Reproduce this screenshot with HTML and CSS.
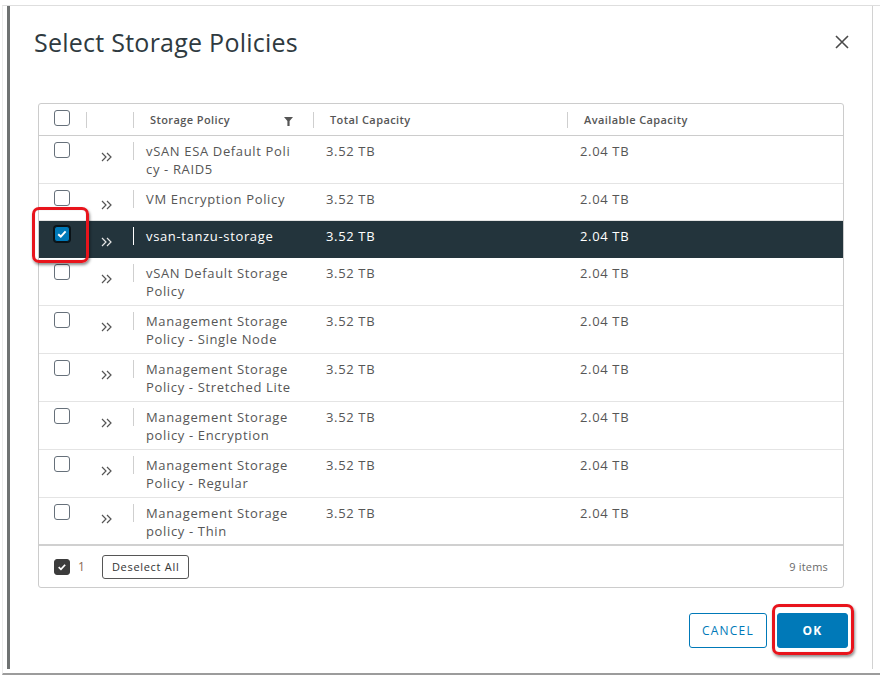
FILE: index.html
```html
<!DOCTYPE html>
<html>
<head>
<meta charset="utf-8">
<link rel="stylesheet" href="styles.css">
</head>
<body>
<div class="screen">
  <div class="dialog">
    <div class="dlg-head">
      <h1 class="title">Select Storage Policies</h1>
      <button class="close" aria-label="Close">
        <svg width="14" height="14" viewBox="0 0 14 14"><path d="M1 1 L13 13 M13 1 L1 13" stroke="#4a4a4a" stroke-width="1.6" fill="none"/></svg>
      </button>
    </div>

    <div class="grid">
      <div class="row head">
        <div class="cell c-check"><span class="cb"></span></div>
        <div class="cell c-exp"><span class="vsep"></span></div>
        <div class="cell c-name"><span class="vsep"></span><span class="htext">Storage Policy</span>
          <svg class="filter" width="9" height="9" viewBox="0 0 9 9"><path d="M0 0 H9 L5.6 4 V9 H3.4 V4 Z" fill="#555"/></svg>
        </div>
        <div class="cell c-total"><span class="vsep"></span><span class="htext">Total Capacity</span></div>
        <div class="cell c-avail"><span class="vsep"></span><span class="htext">Available Capacity</span></div>
      </div>

      <div class="row tall">
        <div class="cell c-check"><span class="cb"></span></div>
        <div class="cell c-exp"><svg class="chev" width="11" height="10" viewBox="0 0 11 10"><path d="M1 1 L5 5 L1 9 M6 1 L10 5 L6 9" fill="none" stroke="#555" stroke-width="1.2"/></svg></div>
        <div class="cell c-name"><span class="vsep"></span><span class="text">vSAN ESA Default Poli<br>cy - RAID5</span></div>
        <div class="cell c-total"><span class="text">3.52 TB</span></div>
        <div class="cell c-avail"><span class="text">2.04 TB</span></div>
      </div>

      <div class="row">
        <div class="cell c-check"><span class="cb"></span></div>
        <div class="cell c-exp"><svg class="chev" width="11" height="10" viewBox="0 0 11 10"><path d="M1 1 L5 5 L1 9 M6 1 L10 5 L6 9" fill="none" stroke="#555" stroke-width="1.2"/></svg></div>
        <div class="cell c-name"><span class="vsep"></span><span class="text">VM Encryption Policy</span></div>
        <div class="cell c-total"><span class="text">3.52 TB</span></div>
        <div class="cell c-avail"><span class="text">2.04 TB</span></div>
      </div>

      <div class="row selected">
        <div class="cell c-check"><span class="cb checked blue"><svg width="14" height="14" viewBox="1 1 14 14"><path d="M4.2 8.2 L6.8 10.6 L11.6 5.4" fill="none" stroke="#fff" stroke-width="2"/></svg></span></div>
        <div class="cell c-exp"><svg class="chev" width="11" height="10" viewBox="0 0 11 10"><path d="M1 1 L5 5 L1 9 M6 1 L10 5 L6 9" fill="none" stroke="#e6e6e6" stroke-width="1.2"/></svg></div>
        <div class="cell c-name"><span class="vsep"></span><span class="text">vsan-tanzu-storage</span></div>
        <div class="cell c-total"><span class="text">3.52 TB</span></div>
        <div class="cell c-avail"><span class="text">2.04 TB</span></div>
      </div>

      <div class="row tall">
        <div class="cell c-check"><span class="cb"></span></div>
        <div class="cell c-exp"><svg class="chev" width="11" height="10" viewBox="0 0 11 10"><path d="M1 1 L5 5 L1 9 M6 1 L10 5 L6 9" fill="none" stroke="#555" stroke-width="1.2"/></svg></div>
        <div class="cell c-name"><span class="vsep"></span><span class="text">vSAN Default Storage<br>Policy</span></div>
        <div class="cell c-total"><span class="text">3.52 TB</span></div>
        <div class="cell c-avail"><span class="text">2.04 TB</span></div>
      </div>

      <div class="row tall">
        <div class="cell c-check"><span class="cb"></span></div>
        <div class="cell c-exp"><svg class="chev" width="11" height="10" viewBox="0 0 11 10"><path d="M1 1 L5 5 L1 9 M6 1 L10 5 L6 9" fill="none" stroke="#555" stroke-width="1.2"/></svg></div>
        <div class="cell c-name"><span class="vsep"></span><span class="text">Management Storage<br>Policy - Single Node</span></div>
        <div class="cell c-total"><span class="text">3.52 TB</span></div>
        <div class="cell c-avail"><span class="text">2.04 TB</span></div>
      </div>

      <div class="row tall">
        <div class="cell c-check"><span class="cb"></span></div>
        <div class="cell c-exp"><svg class="chev" width="11" height="10" viewBox="0 0 11 10"><path d="M1 1 L5 5 L1 9 M6 1 L10 5 L6 9" fill="none" stroke="#555" stroke-width="1.2"/></svg></div>
        <div class="cell c-name"><span class="vsep"></span><span class="text">Management Storage<br>Policy - Stretched Lite</span></div>
        <div class="cell c-total"><span class="text">3.52 TB</span></div>
        <div class="cell c-avail"><span class="text">2.04 TB</span></div>
      </div>

      <div class="row tall">
        <div class="cell c-check"><span class="cb"></span></div>
        <div class="cell c-exp"><svg class="chev" width="11" height="10" viewBox="0 0 11 10"><path d="M1 1 L5 5 L1 9 M6 1 L10 5 L6 9" fill="none" stroke="#555" stroke-width="1.2"/></svg></div>
        <div class="cell c-name"><span class="vsep"></span><span class="text">Management Storage<br>policy - Encryption</span></div>
        <div class="cell c-total"><span class="text">3.52 TB</span></div>
        <div class="cell c-avail"><span class="text">2.04 TB</span></div>
      </div>

      <div class="row tall">
        <div class="cell c-check"><span class="cb"></span></div>
        <div class="cell c-exp"><svg class="chev" width="11" height="10" viewBox="0 0 11 10"><path d="M1 1 L5 5 L1 9 M6 1 L10 5 L6 9" fill="none" stroke="#555" stroke-width="1.2"/></svg></div>
        <div class="cell c-name"><span class="vsep"></span><span class="text">Management Storage<br>Policy - Regular</span></div>
        <div class="cell c-total"><span class="text">3.52 TB</span></div>
        <div class="cell c-avail"><span class="text">2.04 TB</span></div>
      </div>

      <div class="row tall last">
        <div class="cell c-check"><span class="cb"></span></div>
        <div class="cell c-exp"><svg class="chev" width="11" height="10" viewBox="0 0 11 10"><path d="M1 1 L5 5 L1 9 M6 1 L10 5 L6 9" fill="none" stroke="#555" stroke-width="1.2"/></svg></div>
        <div class="cell c-name"><span class="vsep"></span><span class="text">Management Storage<br>policy - Thin</span></div>
        <div class="cell c-total"><span class="text">3.52 TB</span></div>
        <div class="cell c-avail"><span class="text">2.04 TB</span></div>
      </div>

      <div class="grid-foot">
        <span class="cb checked dark"><svg width="16" height="16" viewBox="0 0 16 16"><path d="M4.2 8.2 L6.8 10.6 L11.6 5.4" fill="none" stroke="#fff" stroke-width="2"/></svg></span>
        <span class="count">1</span>
        <button class="btn-small">Deselect All</button>
        <span class="items">9 items</span>
      </div>
    </div>

    <div class="dlg-foot">
      <button class="btn btn-outline">CANCEL</button>
      <button class="btn btn-primary">OK</button>
    </div>
  </div>

  <div class="hl hl-check"></div>
  <div class="hl hl-ok"></div>
</div>
</body>
</html>
```

FILE: styles.css
```css
* { box-sizing: border-box; }
html, body { margin: 0; padding: 0; background: #fff; }
body {
  font-family: "Open Sans", "Liberation Sans", sans-serif;
  color: #565656;
  width: 880px;
  height: 677px;
  overflow: hidden;
}
.screen {
  position: relative;
  margin: 5px 0 0 2px;
  height: 670px;
  border-top: 1px solid #dedede;
  border-left: 1px solid #ececec;
  border-bottom: 2px solid #9c9c9c;
}
.dialog {
  margin-left: 4px;
  width: 866px;
  height: 663px;
  border-left: 3px solid #6f7272;
  border-right: 1px solid #d2d2d2;
  display: flex;
  flex-direction: column;
}
.dlg-head {
  display: flex;
  align-items: center;
  justify-content: space-between;
  padding: 20px 22px 2px 24px;
}
.title {
  margin: 0;
  font-size: 25px;
  line-height: 32px;
  font-weight: 400;
  letter-spacing: 0.25px;
  color: #2f3a40;
}
.close {
  border: 0;
  background: none;
  padding: 0;
  width: 16px;
  height: 16px;
  display: flex;
  align-items: center;
  justify-content: center;
}
.grid {
  margin: 43px 28px 0 28px;
  border: 1px solid #cccccc;
  border-radius: 3px;
}
.row {
  display: grid;
  grid-template-columns: 47px 47px 180px 254px 1fr;
  border-bottom: 1px solid #e4e4e4;
  min-height: 37px;
  font-size: 13px;
  line-height: 18px;
  letter-spacing: 0.65px;
}
.row.tall { min-height: 48px; }
.row.last { border-bottom: 2px solid #d0d0d0; }
.row.head {
  min-height: 32px;
  border-bottom: 1px solid #cccccc;
  font-size: 11px;
  font-weight: 600;
  letter-spacing: 0.4px;
  color: #565656;
}
.cell { display: flex; align-items: flex-start; }
.head .cell { align-items: center; }
.vsep {
  width: 1px;
  height: 18px;
  background: #cfcfcf;
  flex: none;
}
.head .vsep { height: 16px; }
.row:not(.head) .vsep { margin-top: 6px; }
.c-check { padding: 6px 0 0 15px; }
.head .c-check { padding: 0 0 3px 15px; }
.c-exp .chev { margin: 16px 0 0 15px; }
.text { padding-top: 6px; }
.c-name .text { padding-left: 12px; }
.c-total .text, .c-avail .text { padding-left: 13px; }
.htext { padding-left: 16px; }
.c-name .filter { margin-left: auto; margin-right: 20px; margin-top: 4px; }

.cb {
  width: 16px;
  height: 16px;
  border: 1px solid #66707a;
  border-radius: 3px;
  background: #fff;
  display: inline-flex;
  align-items: center;
  justify-content: center;
  flex: none;
}
.cb svg { display: block; }
.cb.checked.blue {
  background: #0079b8;
  border: 1px solid #0a1216;
  box-shadow: 0 0 0 1px #0a1216;
  margin-top: -1px;
}
.cb.checked.dark { background: #3c3c3c; border-color: #3c3c3c; }

.row.selected { background: #23343c; color: #ffffff; border-bottom-color: #23343c; }
.row.selected .vsep { background: #ffffff; }

.grid-foot {
  display: flex;
  align-items: center;
  height: 41px;
  padding: 0 15px 0 15px;
  font-size: 11px;
}
.count { margin-left: 8px; font-size: 12px; color: #8a6a55; }
.btn-small {
  margin-left: 17px;
  height: 24px;
  padding: 0 9px;
  border: 1px solid #565656;
  border-radius: 3px;
  background: #fff;
  font-family: "Open Sans", "Liberation Sans", sans-serif;
  font-size: 11px;
  letter-spacing: 0.7px;
  color: #333;
}
.items { margin-left: auto; color: #6a6a6a; letter-spacing: 0.2px; }

.dlg-foot {
  display: flex;
  justify-content: flex-end;
  gap: 10px;
  padding: 25px 24px 0 0;
}
.btn {
  height: 35px;
  border-radius: 3px;
  font-family: "Open Sans", "Liberation Sans", sans-serif;
  font-size: 12px;
  letter-spacing: 1.2px;
  padding: 0;
}
.btn-outline {
  width: 78px;
  border: 1px solid #0079b8;
  background: #fff;
  color: #0079b8;
}
.btn-primary {
  width: 71px;
  border: 1px solid #0079b8;
  background: #0079b8;
  color: #fff;
  font-weight: 700;
}

.hl {
  position: absolute;
  border: 3px solid #e8141c;
  border-radius: 7px;
  box-shadow: 1px 2px 3px rgba(0,0,0,0.45), inset 0 0 1px rgba(0,0,0,0.3);
}
.hl-check { left: 29px; top: 201px; width: 57px; height: 56px; }
.hl-ok { left: 769px; top: 598px; width: 82px; height: 51px; }
```
